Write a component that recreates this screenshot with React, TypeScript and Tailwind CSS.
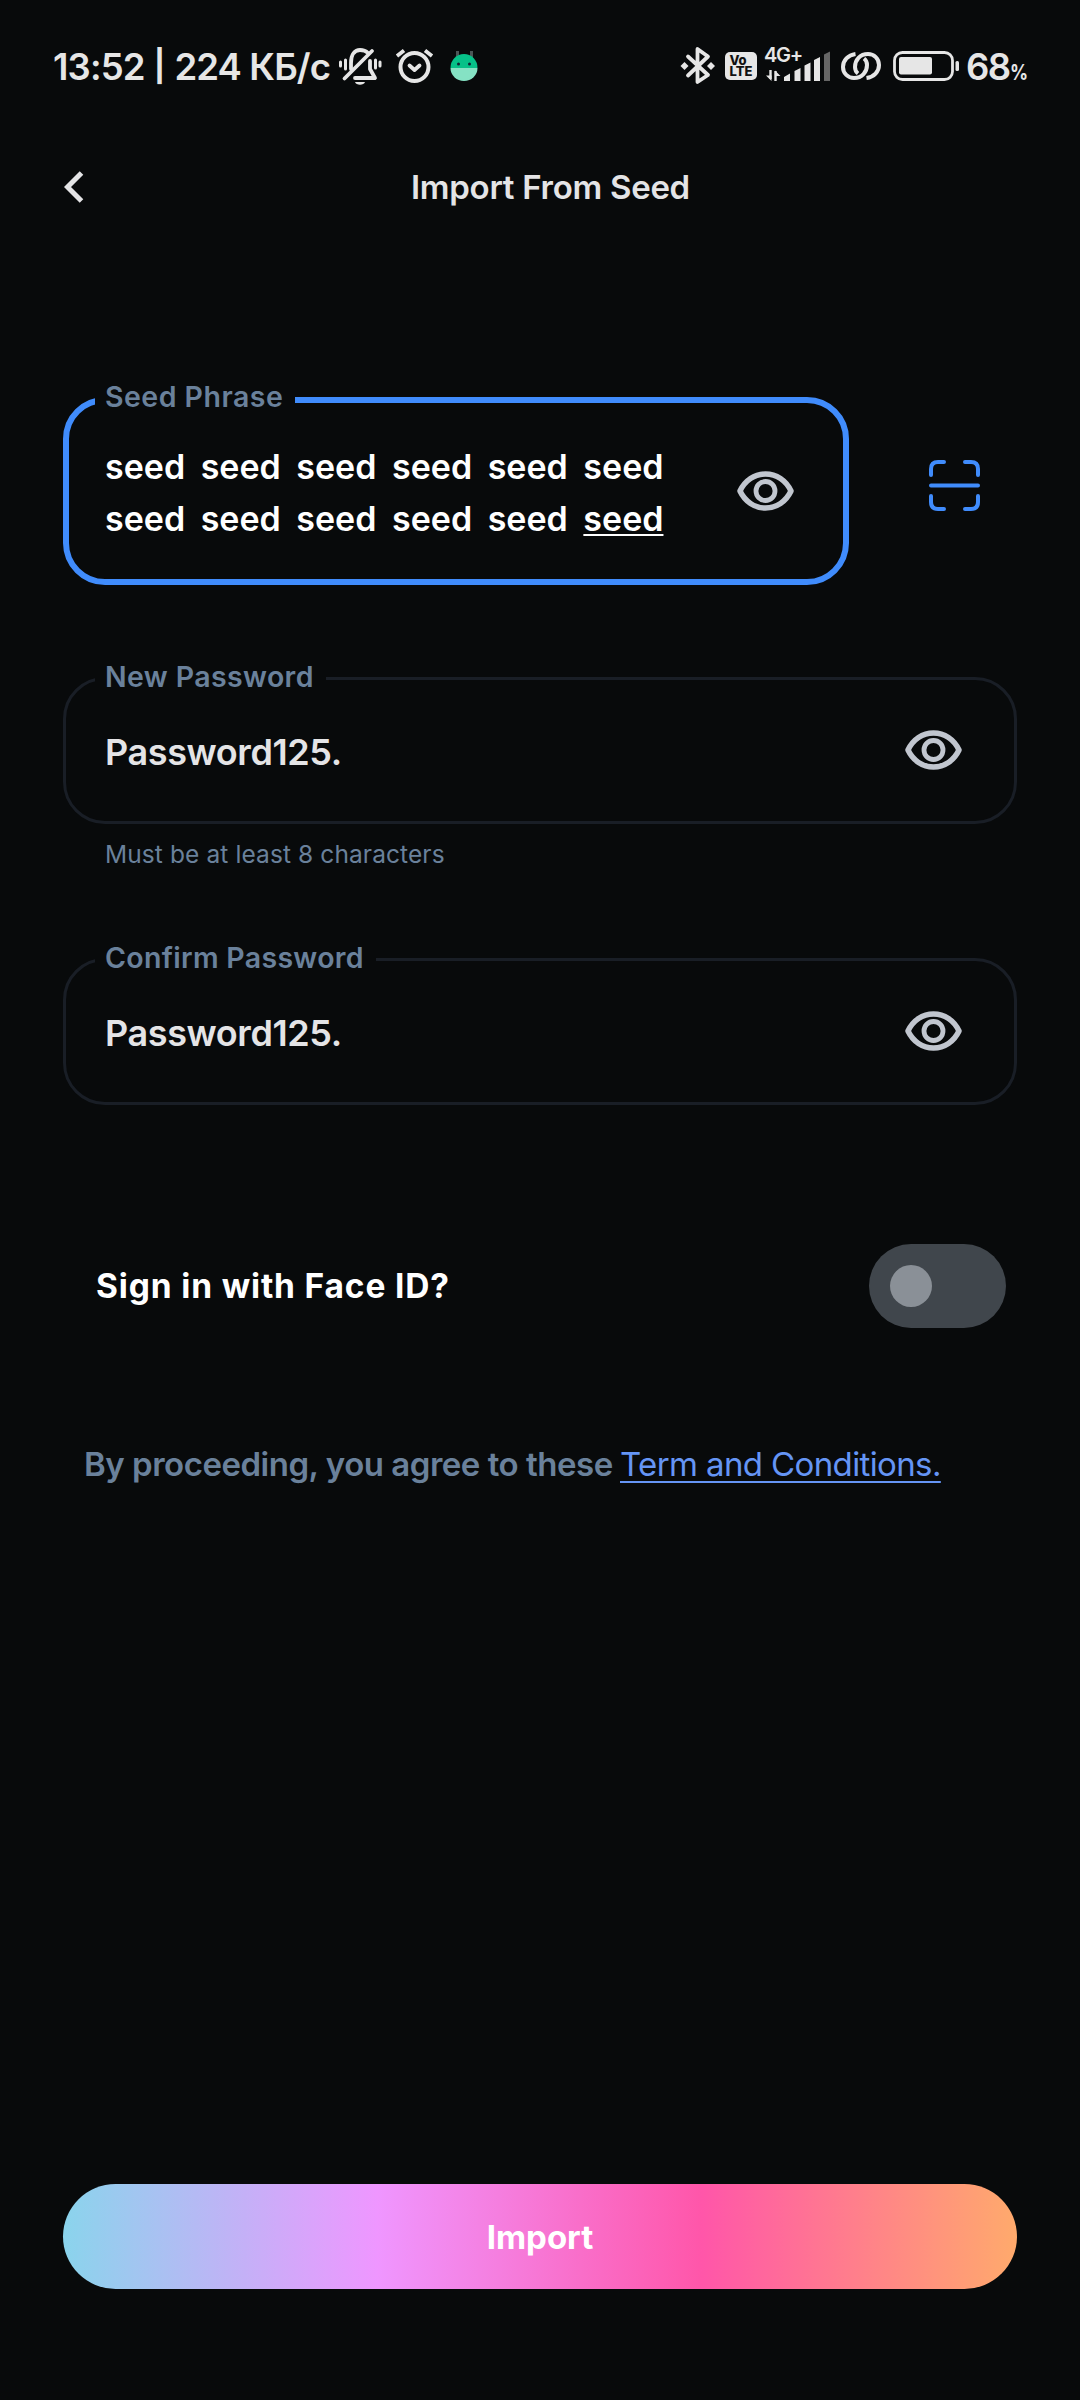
import React from "react";

function Eye() {
  return (
    <svg width="57" height="40" viewBox="0 0 57 40" fill="none" stroke="#c1c6cf" className="-mt-px block shrink-0">
      <path d="M3 20C8 9.500 17.500 3 28.500 3S49 9.500 54 20C49 30.500 39.500 37 28.500 37S8 30.500 3 20Z" strokeWidth="5.500" strokeLinejoin="round" />
      <circle cx="28.500" cy="20" r="9.500" strokeWidth="4.800" />
    </svg>
  );
}

function StatusIcons() {
  return (
    <svg width="145" height="52" viewBox="335 40 145 52" fill="none" stroke="#e6e6e6" strokeLinecap="round" strokeLinejoin="round" className="-mt-[3px] ml-[3px] block">
      <path d="M351 69V63C351 54 355 50 360 50C363 50 366 51 368 53M370 61V69L375 78H355" strokeWidth="3.800" />
      <path d="M344.500 78.500L372 51" strokeWidth="3.800" />
      <path d="M355 82H365C364 85.500 356 85.500 355 82Z" fill="#e6e6e6" stroke="none" />
      <path d="M340.500 62V66M345.500 60V69M375.500 60V68M380 62V66" strokeWidth="3" />
      <circle cx="414.500" cy="67" r="14" strokeWidth="4" />
      <path d="M409.500 65.500L414.500 70L419.500 65.500" strokeWidth="3.800" />
      <path d="M397 56L404 50.500M432 56L425 50.500" strokeWidth="3.800" strokeLinecap="butt" />
      <g stroke="none">
        <path d="M456 51h3v8h-3zM470 51h3v8h-3z" fill="#4b5556" />
        <path d="M450.500 68a13.500 14 0 0 1 27 0Z" fill="#06c188" />
        <path d="M450.500 68h27a13.500 13 0 0 1-27 0Z" fill="#85e2c4" />
        <circle cx="458.500" cy="64" r="1.500" fill="#123" />
        <circle cx="469.500" cy="64" r="1.500" fill="#123" />
      </g>
    </svg>
  );
}

function ConnectivityIcons() {
  return (
    <div className="-mt-[3px] flex items-center">
      <svg width="42" height="52" viewBox="680 40 42 52" fill="none" stroke="#e6e6e6" className="block">
        <path d="M688 56.500L708 75L697.500 82V49L708 56.500L688 75.500" strokeWidth="3.800" strokeLinejoin="round" strokeLinecap="round" />
        <path d="M680.500 66l4-4 4 4-4 4ZM707 66l4-4 4 4-4 4Z" fill="#e6e6e6" stroke="none" />
      </svg>
      <div className="ml-[3px] flex h-[28px] w-[32px] flex-col items-center justify-center rounded-[5px] bg-[#e6e6e6] text-[13px] leading-[11.500px] font-extrabold text-[#111]">
        <span className="-ml-[6px]">Vo</span>
        <span>LTE</span>
      </div>
      <div className="relative ml-[7px] h-[52px] w-[66px]">
        <span className="absolute top-[6px] left-0 text-[20px] leading-[19px] font-semibold tracking-[-1.300px]">4G+</span>
        <svg width="66" height="52" viewBox="764 40 66 52" className="absolute top-0 left-0" fill="#e6e6e6">
          <path d="M770.500 70v9M775.500 81V71" stroke="#e6e6e6" strokeWidth="2.400" />
          <path d="M766 75.500h5.500v5.500ZM780.500 76h-5.500v-5.500Z" />
          <path d="M784 77l6-3.500v7.500h-6ZM794.500 71l6-3v13h-6ZM804.500 65.500l6-3v18.500h-6ZM814 60l6-3v24h-6Z" />
          <path d="M824 54.500l6-3v29.500h-6Z" fill="#666" />
        </svg>
      </div>
      <svg width="40" height="52" viewBox="841 40 40 52" fill="none" stroke="#e6e6e6" strokeWidth="4" className="ml-[11px] block" strokeLinecap="butt">
        <path d="M855.500 54C848 55 843 60.500 843 67C843 73.500 848 78 854 78C862 78 867 72 867 65C867 62 866 60 864 58.500" />
        <path d="M866.500 78C874 77 879 71.500 879 65C879 58.500 874 54 868 54C860 54 855 60 855 67C855 70 856 72 858 73.500" />
      </svg>
      <svg width="66" height="52" viewBox="893 40 66 52" fill="none" className="ml-[12px] block">
        <rect x="894.500" y="52.500" width="58" height="27" rx="8" stroke="#e6e6e6" strokeWidth="2.800" />
        <rect x="899" y="57" width="33" height="17.500" rx="2" fill="#e6e6e6" />
        <rect x="955.500" y="61" width="3.500" height="10" rx="1.500" fill="#e6e6e6" />
      </svg>
    </div>
  );
}

interface FieldProps {
  label: string;
  labelClass: string;
  frame: string;
  children: React.ReactNode;
}

function Field({ label, labelClass, frame, children }: FieldProps) {
  return (
    <div className={"relative flex items-center justify-between rounded-[42px] " + frame}>
      <span className={"absolute h-[40px] bg-[#080a0b] pl-[10px] text-[28.500px] leading-[40px] font-semibold whitespace-nowrap text-[#6a819b] " + labelClass}>
        {label}
      </span>
      {children}
    </div>
  );
}

export default function App() {
  return (
    <div className="flex h-[2400px] w-[1080px] flex-col overflow-hidden bg-[#080a0b] font-['Inter',sans-serif] text-[#e4e4e6]">
      <header className="flex h-[132px] items-start justify-between pt-[40px] pr-[53px] pl-[53px] text-[#e6e6e6]">
        <div className="flex items-center">
          <span className="w-[279px] text-[36.500px] leading-[55px] font-semibold tracking-[-0.880px] whitespace-pre">13:52 <span className="inline-block -translate-y-px scale-y-[0.85] pr-px">|</span> 224 КБ/с</span>
          <StatusIcons />
        </div>
        <div className="flex items-center">
          <ConnectivityIcons />
          <div className="ml-[7px] flex w-[61px] items-baseline">
            <span className="text-[36.500px] leading-[55px] font-semibold tracking-[-1.500px]">68</span>
            <span className="text-[21px] font-bold tracking-[-1px]"><span className="inline-block origin-left scale-x-[0.85]">%</span></span>
          </div>
        </div>
      </header>

      <nav className="flex h-[110px] items-center pl-[64px]">
        <svg width="20" height="32" viewBox="0 0 20 32" fill="none" stroke="#e4e4e6" strokeWidth="5" className="block">
          <path d="M17.500 2L3.500 16L17.500 30" />
        </svg>
        <h1 className="ml-[327px] text-[33px] leading-[44px] font-semibold tracking-[-0.280px] whitespace-nowrap">Import From Seed</h1>
      </nav>

      <main className="flex grow flex-col px-[63px] pt-[155px]">
        <div className="flex h-[188px] items-center">
          <Field label="Seed Phrase" labelClass="w-[200px] -top-[26px] left-[26px] tracking-[0.480px]" frame="h-[188px] w-[786px] border-[6px] border-[#408cfc] pr-[49px] pl-[36px]">
            <p className="pt-[4px] text-[34px] leading-[52px] font-semibold whitespace-nowrap text-white [word-spacing:7px]">
              seed seed seed seed seed seed
              <br />
              seed seed seed seed seed <span className="underline decoration-2 underline-offset-[3px]">seed</span>
            </p>
            <Eye />
          </Field>
          <svg width="51" height="51" viewBox="0 0 51 51" fill="none" stroke="#408cfc" strokeWidth="4" strokeLinecap="round" className="ml-[80px] -mt-[11px] block">
            <path d="M2 15V9Q2 2 9 2H15M36 2H42Q49 2 49 9V15M49 36V42Q49 49 42 49H36M15 49H9Q2 49 2 42V36M2 25.500H49" />
          </svg>
        </div>

        <div className="mt-[92px]">
          <Field label="New Password" labelClass="w-[231px] -top-[23px] left-[29px] tracking-[0.380px]" frame="h-[147px] border-[3px] border-[#191e26] pr-[52px] pl-[39px]">
            <span className="pt-[2px] text-[36px] leading-[52px] font-semibold tracking-[-0.400px]">Password125.</span>
            <Eye />
          </Field>
          <p className="pt-[10px] pl-[42px] text-[24.500px] leading-[40px] tracking-[0.100px] text-[#6a819b]">Must be at least 8 characters</p>
        </div>

        <div className="mt-[84px]">
          <Field label="Confirm Password" labelClass="w-[281px] -top-[23px] left-[29px] tracking-[0.300px]" frame="h-[147px] border-[3px] border-[#191e26] pr-[52px] pl-[39px]">
            <span className="pt-[2px] text-[36px] leading-[52px] font-semibold tracking-[-0.400px]">Password125.</span>
            <Eye />
          </Field>
        </div>

        <div className="mt-[139px] flex h-[84px] items-center justify-between pr-[11px] pl-[33px]">
          <span className="text-[33.500px] leading-[44px] font-bold tracking-[0.850px] text-white">Sign in with Face ID?</span>
          <span className="flex h-[84px] w-[137px] items-center rounded-full bg-[#40464c] pl-[21px]">
            <span className="h-[42px] w-[42px] rounded-full bg-[#8a9097]" />
          </span>
        </div>

        <p className="mt-[114px] flex pl-[21px] text-[33px] leading-[44px] whitespace-nowrap text-[#6a819b]">
          <span className="w-[536px] font-semibold tracking-[-0.480px]">By proceeding, you agree to these</span>
          <span className="tracking-[-0.620px] text-[#6595f5] underline decoration-2 underline-offset-[5px]">Term and Conditions.</span>
        </p>

        <button className="mt-auto mb-[111px] flex h-[105px] shrink-0 items-center justify-center rounded-full bg-[linear-gradient(90deg,#8ad4ec_0%,#ef96ff_33%,#ff56a9_67%,#ffaa6c_100%)] text-[33px] font-bold text-white">
          <span className="pt-[2px]">Import</span>
        </button>
      </main>
    </div>
  );
}
